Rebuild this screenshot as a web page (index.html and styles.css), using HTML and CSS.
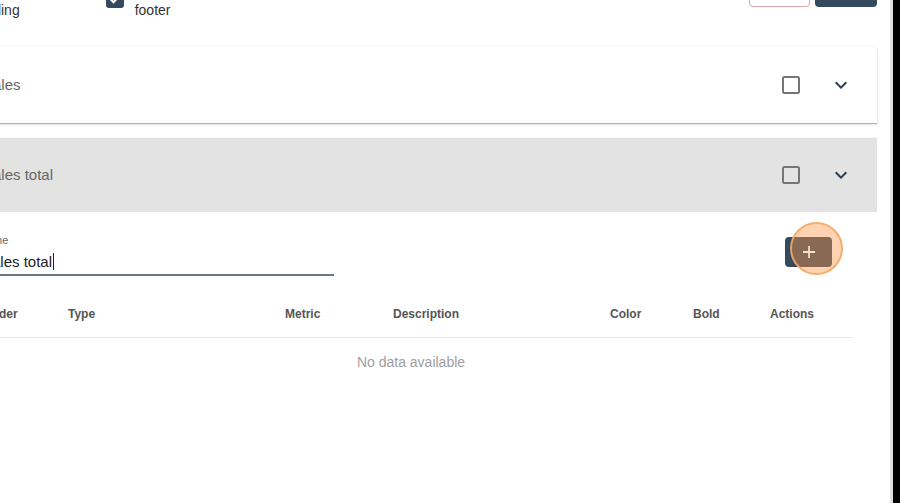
FILE: index.html
```html
<!DOCTYPE html>
<html lang="en">
<head>
  <meta charset="UTF-8">
  <meta name="viewport" content="width=device-width, initial-scale=1.0">
  <title>Report sections</title>
  <link rel="stylesheet" href="styles.css">
</head>
<body>
  <div class="screen">
    <div class="page">

      <div class="topbar">
        <div class="checks">
          <label class="check">
            <span class="box on"><svg viewBox="0 0 18 18" width="18" height="18"><path d="M4.5 9.2l3 3 6-6.2" fill="none" stroke="#fff" stroke-width="2"/></svg></span>
            <span class="check-text">Show<br>styling</span>
          </label>
          <label class="check">
            <span class="box on"><svg viewBox="0 0 18 18" width="18" height="18"><path d="M4.5 9.2l3 3 6-6.2" fill="none" stroke="#fff" stroke-width="2"/></svg></span>
            <span class="check-text">Show<br>footer</span>
          </label>
        </div>
        <div class="actions">
          <button class="btn btn-outline">Cancel</button>
          <button class="btn btn-fill">Save</button>
        </div>
      </div>

      <div class="panel">
        <div class="panel-head">
          <div class="panel-title">Sales</div>
          <svg class="icon" viewBox="0 0 24 24" width="24" height="24"><rect x="4" y="4" width="16" height="16" rx="1.5" fill="none" stroke="#757575" stroke-width="2"/></svg>
          <svg class="icon chevron" viewBox="0 0 24 24" width="24" height="24"><path d="M7.41 8.59 12 13.17l4.59-4.58L18 10l-6 6-6-6z"/></svg>
        </div>
      </div>

      <div class="panel open">
        <div class="panel-head">
          <div class="panel-title">Sales total</div>
          <svg class="icon" viewBox="0 0 24 24" width="24" height="24"><rect x="4" y="4" width="16" height="16" rx="1.5" fill="none" stroke="#757575" stroke-width="2"/></svg>
          <svg class="icon chevron" viewBox="0 0 24 24" width="24" height="24"><path d="M7.41 8.59 12 13.17l4.59-4.58L18 10l-6 6-6-6z"/></svg>
        </div>

        <div class="panel-body">
          <div class="field-row">
            <div class="field">
              <div class="field-label">Name</div>
              <div class="field-input">Sales total<span class="caret"></span></div>
            </div>
            <button class="add-btn">
              <svg viewBox="0 0 14 14" width="14" height="14"><path d="M7 1v12M1 7h12" stroke="currentColor" stroke-width="1.8"/></svg>
              <span class="click-ring"></span>
            </button>
          </div>

          <div class="table">
            <div class="row head">
              <div>Order</div>
              <div>Type</div>
              <div>Metric</div>
              <div>Description</div>
              <div>Color</div>
              <div>Bold</div>
              <div>Actions</div>
            </div>
            <div class="empty">No data available</div>
          </div>
        </div>
      </div>

    </div>
  </div>
</body>
</html>
```

FILE: styles.css
```css
* {
  box-sizing: border-box;
  margin: 0;
  padding: 0;
}

html, body {
  height: 100%;
  overflow: hidden;
  background: #000;
  font-family: 'Liberation Sans', Arial, sans-serif;
}

.screen {
  width: 893px;
  height: 503px;
  background: #fff;
  border-right: 3px solid #dedede;
  overflow: hidden;
}

.page {
  width: 917px;
  margin-left: -40px;
  margin-top: -36px;
}

/* top row: checkboxes + buttons */
.topbar {
  display: flex;
  justify-content: space-between;
  align-items: flex-start;
  height: 83px;
}

.checks {
  display: flex;
  gap: 86px;
  margin-top: 19px;
  margin-left: -9px;
}

.check {
  display: flex;
  align-items: flex-start;
  gap: 11px;
  color: #333;
  font-size: 14px;
  line-height: 18px;
}

.box {
  width: 18px;
  height: 18px;
  margin-top: 7px;
  border-radius: 3px;
  display: flex;
}

.box.on {
  background: #35495e;
}

.actions {
  display: flex;
  gap: 5px;
  margin-top: 7px;
}

.btn {
  height: 36px;
  border-radius: 4px;
  font-family: inherit;
  font-size: 14px;
  cursor: pointer;
}

.btn-outline {
  width: 61px;
  background: #fff;
  border: 1px solid #dba5a5;
  color: #c55;
}

.btn-fill {
  width: 62px;
  background: #35495e;
  border: none;
  color: #fff;
}

/* expansion panels */
.panel {
  background: #fff;
  box-shadow: 0 -1px 1px rgba(0,0,0,0.03), 0 1px 1px rgba(0,0,0,0.25), 0 2px 3px rgba(0,0,0,0.08);
}

.panel.open {
  margin-top: 15px;
  box-shadow: 0 -1px 1px rgba(0,0,0,0.03);
}

.panel-head {
  display: flex;
  align-items: center;
  height: 76px;
  padding: 0 24px 0 23px;
}

.open .panel-head {
  height: 74px;
  background: #e3e3e3;
}

.panel-title {
  flex: 1;
  font-size: 15px;
  color: #666;
  margin-top: -2px;
}

.icon {
  flex: none;
}

.chevron {
  margin-left: 26px;
  fill: #2c3e50;
}

.panel-body {
  padding-bottom: 40px;
}

.field-row {
  display: flex;
  justify-content: space-between;
  align-items: flex-start;
  padding: 22px 45px 0 22px;
}

.field {
  width: 352px;
}

.field-label {
  font-size: 11px;
  line-height: 13px;
  color: #666;
  margin-bottom: 3px;
  margin-left: -3px;
}

.field-input {
  height: 26px;
  font-size: 15px;
  line-height: 24px;
  color: #222;
  border-bottom: 2px solid #6e7681;
}

.caret {
  display: inline-block;
  width: 1px;
  height: 17px;
  margin-left: 1px;
  background: #222;
  vertical-align: -3px;
}

.add-btn {
  position: relative;
  width: 47px;
  height: 30px;
  margin-top: 3px;
  border: none;
  border-radius: 4px;
  background: #35495e;
  color: #f7dfc8;
  display: flex;
  align-items: center;
  justify-content: center;
}

.add-btn svg {
  position: relative;
  z-index: 1;
}

.click-ring {
  position: absolute;
  left: 5px;
  top: -15px;
  width: 53px;
  height: 53px;
  border-radius: 50%;
  background: rgba(255, 150, 70, 0.42);
  border: 2px solid rgba(244, 168, 100, 0.9);
}

/* table */
.table {
  margin: 14px 0 0 9px;
  width: 884px;
}

.row {
  display: grid;
  grid-template-columns: 83px 217px 108px 217px 83px 77px 99px;
  height: 48px;
  align-items: center;
  border-bottom: 1px solid #e8e8e8;
}

.row div {
  padding-left: 16px;
}

.head {
  font-size: 12px;
  font-weight: bold;
  color: #555;
}

.empty {
  height: 48px;
  line-height: 48px;
  text-align: center;
  font-size: 14px;
  color: #9e9e9e;
}
```
